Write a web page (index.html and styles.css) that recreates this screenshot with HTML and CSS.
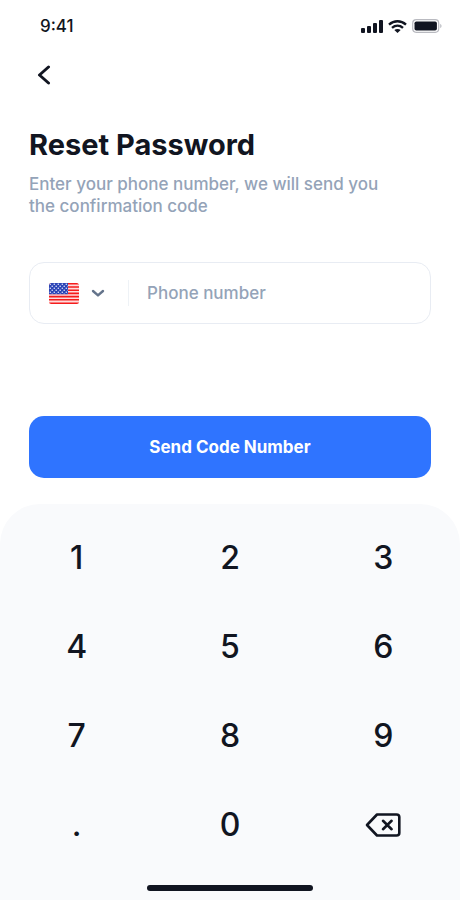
FILE: index.html
```html
<!DOCTYPE html>
<html lang="en">
<head>
  <meta charset="utf-8">
  <meta name="viewport" content="width=device-width, initial-scale=1">
  <title>Reset Password</title>
  <link rel="stylesheet" href="styles.css">
</head>
<body>
  <div class="screen">
    <header class="status-bar">
      <time class="clock">9:41</time>
      <div class="indicators">
        <svg width="22" height="13" viewBox="0 0 22 13" fill="currentColor" aria-hidden="true">
          <rect x="0" y="8" width="4" height="5" rx="1"/>
          <rect x="6" y="6" width="4" height="7" rx="1"/>
          <rect x="12" y="3" width="4" height="10" rx="1"/>
          <rect x="18" y="0" width="4" height="13" rx="1"/>
        </svg>
        <svg width="19" height="13" viewBox="0 0 19 13" aria-hidden="true">
          <g fill="none" stroke="currentColor" stroke-width="2.4">
            <path d="M1 4.600C6 .1 13 .1 18 4.600"/>
            <path d="M4 7.800c3.300-2.900 7.700-2.900 11 0"/>
          </g>
          <path d="M6.300 10c1.900-1.500 4.500-1.500 6.400 0L9.500 13z" fill="currentColor"/>
        </svg>
        <svg width="30" height="14" viewBox="0 0 30 14" aria-hidden="true">
          <rect x=".7" y=".7" width="26" height="12.600" rx="3.500" fill="none" stroke="#b9bac0" stroke-width="1.200"/>
          <rect x="2.500" y="2.500" width="22.400" height="9" rx="1.800" fill="currentColor"/>
          <path d="M28.300 4.800c1.600.8 1.600 3.600 0 4.400z" fill="#b0b1b8"/>
        </svg>
      </div>
    </header>

    <main class="content">
      <button class="back" type="button" aria-label="Back">
        <svg width="14" height="20" viewBox="0 0 14 20" fill="none" stroke="currentColor" stroke-width="3" stroke-linecap="round" stroke-linejoin="round" aria-hidden="true">
          <path d="M11.500 2 2.500 10l9 8"/>
        </svg>
      </button>

      <h1 class="title">Reset Password</h1>
      <p class="lead">Enter your phone number, we will send you the confirmation code</p>

      <form class="form">
        <div class="field">
          <button class="country" type="button" aria-label="Country: United States">
            <svg width="30" height="21" viewBox="0 0 30 21" aria-hidden="true">
              <defs>
                <clipPath id="flag"><rect width="30" height="21" rx="2.500"/></clipPath>
                <pattern id="stars" width="4" height="4" patternUnits="userSpaceOnUse">
                  <circle cx="1.300" cy="1.300" r=".8" fill="#dfe4fb"/>
                  <circle cx="3.200" cy="3.200" r=".8" fill="#dfe4fb"/>
                </pattern>
              </defs>
              <g clip-path="url(#flag)">
                <rect width="30" height="21" fill="#ffdcdc"/>
                <path d="M0 .8h30M0 4h30M0 7.200h30M0 10.400h30M0 13.600h30M0 16.800h30M0 20.200h30" stroke="#f51c1c" stroke-width="1.600"/>
                <rect width="19" height="11.200" fill="#2b44b5"/>
                <rect width="19" height="11.200" fill="url(#stars)"/>
              </g>
            </svg>
            <svg width="14" height="9" viewBox="0 0 14 9" fill="none" stroke="#64748b" stroke-width="2.400" stroke-linecap="round" stroke-linejoin="round" aria-hidden="true">
              <path d="M2 2l5 4.400L12 2"/>
            </svg>
          </button>
          <input class="phone" type="tel" placeholder="Phone number" aria-label="Phone number">
        </div>
        <button class="submit" type="submit">Send Code Number</button>
      </form>
    </main>

    <section class="keypad" aria-label="Keypad">
      <div class="keys">
        <button class="key" type="button">1</button>
        <button class="key" type="button">2</button>
        <button class="key" type="button">3</button>
        <button class="key" type="button">4</button>
        <button class="key" type="button">5</button>
        <button class="key" type="button">6</button>
        <button class="key" type="button">7</button>
        <button class="key" type="button">8</button>
        <button class="key" type="button">9</button>
        <button class="key" type="button">.</button>
        <button class="key" type="button">0</button>
        <button class="key" type="button" aria-label="Delete">
          <svg width="36" height="24" viewBox="0 0 36 24" fill="none" stroke="currentColor" stroke-width="2.600" stroke-linecap="round" stroke-linejoin="round" aria-hidden="true">
            <path d="M12 1.500H31.500Q34.300 1.500 34.300 4V20Q34.300 22.500 31.500 22.500H12L2 12z"/>
            <path d="M18 7.800l8.600 8.400M26.600 7.800l-8.600 8.400"/>
          </svg>
        </button>
      </div>
      <div class="home-indicator"></div>
    </section>
  </div>
</body>
</html>
```

FILE: styles.css
```css
* {
  box-sizing: border-box;
}

body {
  margin: 0;
  background: #fff;
  color: #111521;
  font-family: Inter, "Liberation Sans", sans-serif;
}

button,
input {
  margin: 0;
  padding: 0;
  border: 0;
  background: none;
  color: inherit;
  font: inherit;
}

button {
  cursor: pointer;
}

svg {
  display: block;
  flex: none;
}

.screen {
  display: flex;
  flex-direction: column;
  min-height: 100vh;
}

.status-bar {
  display: flex;
  align-items: center;
  justify-content: space-between;
  padding: 16px 18px 0 40px;
}

.clock {
  font-size: 17px;
  font-weight: 500;
  line-height: 20px;
}

.indicators {
  display: flex;
  align-items: center;
  gap: 5px;
}

.content {
  padding: 27px 29px 0;
}

.back {
  display: block;
  padding: 2px 8px;
}

.title {
  margin: 40px 0 0;
  font-size: 29px;
  font-weight: 700;
  line-height: 36px;
}

.lead {
  max-width: 376px;
  margin: 10px 0 0;
  color: #94a3b8;
  font-size: 17px;
  font-weight: 500;
  line-height: 22px;
}

.field {
  display: flex;
  align-items: center;
  height: 62px;
  margin-top: 45px;
  border: 1px solid #e8ecf3;
  border-radius: 15px;
}

.country {
  display: flex;
  align-items: center;
  gap: 12px;
  height: 26px;
  padding: 0 23px 0 19px;
  border-right: 1px solid #eef2f6;
}

.phone {
  flex: 1;
  min-width: 0;
  height: 100%;
  padding: 0 18px;
  font-size: 17px;
  font-weight: 500;
  outline: none;
}

.phone::placeholder {
  color: #94a3b8;
  opacity: 1;
}

.submit {
  width: 100%;
  height: 62px;
  margin-top: 92px;
  border-radius: 15px;
  background: #2f74ff;
  color: #fff;
  font-size: 17px;
  font-weight: 700;
}

.keypad {
  display: flex;
  flex: 1;
  flex-direction: column;
  justify-content: space-between;
  margin-top: 26px;
  padding: 9px 0;
  border-radius: 40px 40px 0 0;
  background: #f9fafc;
}

.keys {
  display: grid;
  grid-template-columns: repeat(3, 1fr);
}

.key {
  display: flex;
  align-items: center;
  justify-content: center;
  height: 89px;
  font-size: 32px;
  font-weight: 500;
}

.home-indicator {
  align-self: center;
  width: 36%;
  height: 6px;
  border-radius: 3px;
  background: #111521;
}
```
